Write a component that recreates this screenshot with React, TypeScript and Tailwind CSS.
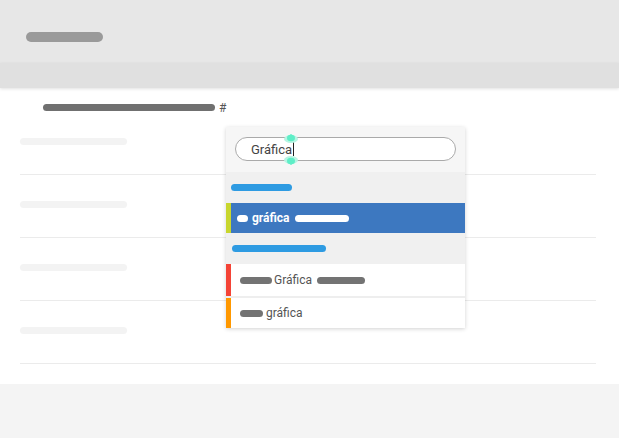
import React from "react";

const Row = () => (
  <div className="h-[63px] border-b border-[#ebebeb] pt-[26px]">
    <div className="h-[7px] w-[107px] rounded-full bg-[#f3f3f3]" />
  </div>
);

const Handle = ({ up }: { up?: boolean }) => (
  <svg width="14" height="9" viewBox="0 0 14 9" className="block">
    {up ? (
      <>
        <ellipse cx="7" cy="5" rx="7" ry="4" fill="#b6f5e3" />
        <ellipse cx="7" cy="4" rx="4" ry="3.2" fill="#5eeec7" />
        <path d="M5 1.5 L7 0 L9 1.5 Z" fill="#5eeec7" />
      </>
    ) : (
      <>
        <ellipse cx="7" cy="4" rx="7" ry="4" fill="#b6f5e3" />
        <ellipse cx="7" cy="5" rx="4" ry="3.2" fill="#5eeec7" />
        <path d="M5 7.5 L7 9 L9 7.5 Z" fill="#5eeec7" />
      </>
    )}
  </svg>
);

export default function App() {
  return (
    <div
      className="relative w-[619px] h-[438px] overflow-hidden bg-white flex flex-col"
      style={{ fontFamily: "Roboto, 'Liberation Sans', sans-serif" }}
    >
      <div className="h-[63px] bg-[#e7e7e7] shrink-0 pt-[32px] pl-[26px]">
        <div className="h-[10px] w-[77px] rounded-full bg-[#9a9a9a]" />
      </div>
      <div className="relative z-10 h-[25px] bg-[#e0e0e0] shrink-0 shadow-[0_1px_3px_rgba(0,0,0,0.12)]" />
      <div className="h-[296px] bg-white shrink-0">
        <div className="h-[24px] pt-[16px]">
          <div className="flex h-[7px] items-center pl-[43px]">
            <div className="h-[7px] w-[172px] rounded-full bg-[#707070]" />
            <span className="ml-[4px] text-[12px] leading-none text-[#555]">#</span>
          </div>
        </div>
        <div className="ml-[20px] mr-[23px]">
          <Row />
          <Row />
          <Row />
          <Row />
        </div>
      </div>
      <div className="flex-1 bg-[#f4f4f4]" />

      <div className="absolute left-[226px] top-[127px] w-[239px] bg-white shadow-[0_1px_4px_rgba(0,0,0,0.18)]">
        <div className="h-[45px] bg-[#f6f6f6] pt-[10px] pl-[9px]">
          <div className="relative flex h-[24px] w-[221px] items-center rounded-full border border-[#aaaaaa] bg-white pl-[15px]">
            <span className="text-[13px] leading-none text-[#444]">Gráfica</span>
            <span className="ml-[1px] h-[14px] w-px bg-[#222]" />
            <div className="absolute left-[48px] top-[-4px]">
              <Handle up />
            </div>
            <div className="absolute left-[48px] bottom-[-5px]">
              <Handle />
            </div>
          </div>
        </div>
        <div className="flex h-[31px] items-center bg-[#f0f0f0] pl-[5px]">
          <div className="h-[7px] w-[61px] rounded-full bg-[#2e9be2]" />
        </div>
        <div className="flex h-[30px] items-center border-l-[5px] border-[#c8d62e] bg-[#3d78c0] pl-[6px]">
          <div className="h-[7px] w-[11px] rounded-full bg-white" />
          <span className="ml-[4px] text-[12px] font-bold leading-none text-white">gráfica</span>
          <div className="ml-[6px] h-[7px] w-[54px] rounded-full bg-white" />
        </div>
        <div className="flex h-[31px] items-center bg-[#f0f0f0] pl-[6px]">
          <div className="h-[7px] w-[94px] rounded-full bg-[#2e9be2]" />
        </div>
        <div className="flex h-[32px] items-center border-l-[5px] border-[#f44336] bg-white pl-[9px]">
          <div className="h-[7px] w-[32px] rounded-full bg-[#737373]" />
          <span className="ml-[2px] text-[12px] leading-none text-[#555]">Gráfica</span>
          <div className="ml-[5px] h-[7px] w-[48px] rounded-full bg-[#737373]" />
        </div>
        <div className="h-[2px] bg-[#eeeeee]" />
        <div className="flex h-[30px] items-center border-l-[5px] border-[#ff9800] bg-white pl-[9px]">
          <div className="h-[7px] w-[23px] rounded-full bg-[#737373]" />
          <span className="ml-[3px] text-[12px] leading-none text-[#555]">gráfica</span>
        </div>
      </div>
    </div>
  );
}
